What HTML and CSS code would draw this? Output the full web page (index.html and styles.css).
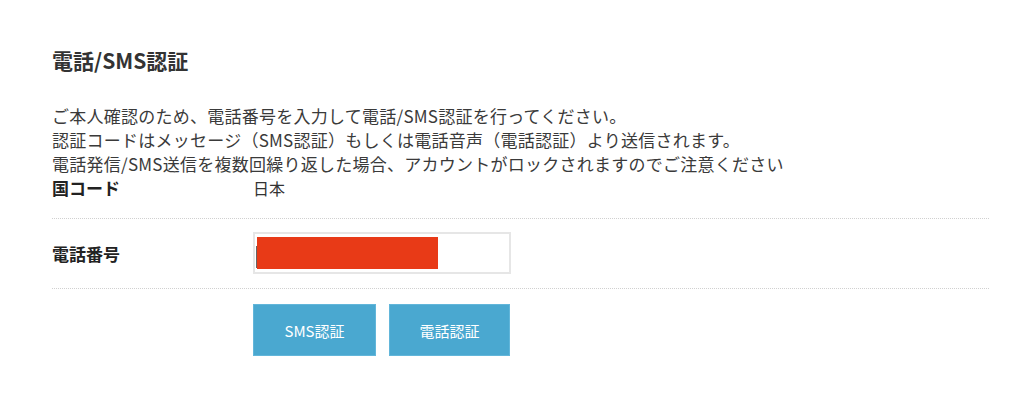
FILE: index.html
```html
<!DOCTYPE html>
<html lang="ja">
<head>
    <meta charset="UTF-8">
    <meta name="viewport" content="width=device-width, initial-scale=1.0">
    <title>電話/SMS認証</title>
    <link rel="stylesheet" href="styles.css">
</head>
<body>
    <div class="auth-container">
        <h2 class="auth-title">電話/SMS認証</h2>

        <p class="description">
            ご本人確認のため、電話番号を入力して電話/SMS認証を行ってください。<br>
            認証コードはメッセージ（SMS認証）もしくは電話音声（電話認証）より送信されます。<br>
            電話発信/SMS送信を複数回繰り返した場合、アカウントがロックされますのでご注意ください
        </p>

        <div class="form-row country-row">
            <div class="row-label">国コード</div>
            <div class="row-value">日本</div>
        </div>

        <div class="form-row phone-row">
            <div class="row-label">電話番号</div>
            <div class="row-value">
                <div class="phone-input">
                    <span class="caret"></span>
                    <span class="redacted"></span>
                </div>
            </div>
        </div>

        <div class="button-row">
            <button class="auth-btn">SMS認証</button>
            <button class="auth-btn">電話認証</button>
        </div>
    </div>
</body>
</html>
```

FILE: styles.css
```css
* {
    margin: 0;
    padding: 0;
    box-sizing: border-box;
}

body {
    background: #ffffff;
    color: #333333;
    font-family: "Noto Sans CJK JP", "Noto Sans", sans-serif;
    overflow: hidden;
}

.auth-container {
    padding: 40px 35px 0 52px;
}

.auth-title {
    font-size: 21px;
    font-weight: 700;
    line-height: 40px;
    color: #333333;
}

.description {
    margin-top: 24px;
    font-size: 17px;
    letter-spacing: 0.25px;
    line-height: 24px;
    color: #3a3a3a;
    white-space: nowrap;
}

.form-row {
    display: flex;
    align-items: center;
    border-bottom: 1px dotted #d0d0d0;
}

.country-row {
    line-height: 24px;
    padding-bottom: 18px;
}

.phone-row {
    padding: 13px 0 14px;
}

.row-label {
    width: 201px;
    font-size: 17px;
    font-weight: 700;
    color: #222222;
}

.row-value {
    font-size: 16px;
    color: #333333;
}

.phone-input {
    width: 258px;
    height: 42px;
    border: 2px solid #e6e6e6;
    display: flex;
    align-items: center;
    padding-left: 1px;
}

.caret {
    width: 1px;
    height: 22px;
    margin-top: 8px;
    background: #666666;
}

.redacted {
    width: 181px;
    height: 32px;
    background: #e83a17;
}

.button-row {
    display: flex;
    gap: 13px;
    margin-top: 15px;
    padding-left: 201px;
}

.auth-btn {
    width: 123px;
    height: 52px;
    background: #4aa8d0;
    border: 1px solid #62b6da;
    color: #ffffff;
    font-family: "Noto Sans CJK JP", "Noto Sans", sans-serif;
    font-size: 15px;
    cursor: pointer;
}

.auth-btn + .auth-btn {
    width: 121px;
}
```
